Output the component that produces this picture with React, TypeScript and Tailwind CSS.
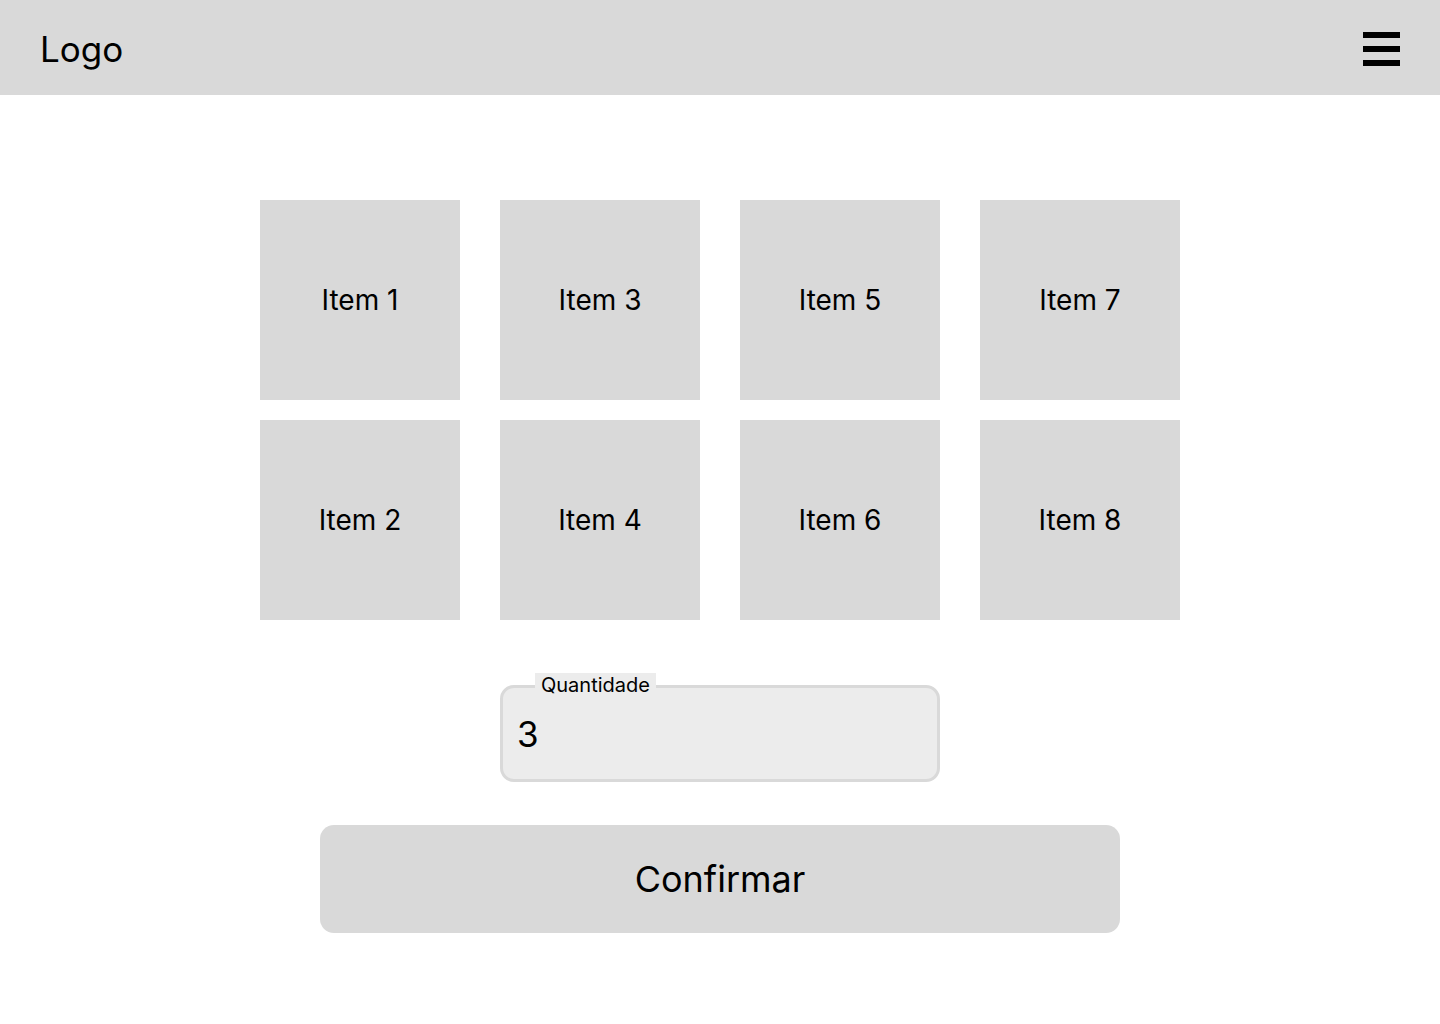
import React from "react";

export default function App() {
  const items = [1, 2, 3, 4, 5, 6, 7, 8];
  return (
    <div className="min-h-[1024px] bg-white text-black" style={{ fontFamily: "Inter, 'Noto Sans', sans-serif" }}>
      <header className="h-[95px] bg-[#d9d9d9] flex items-center justify-between pl-[40px] pr-[40px]">
        <span className="text-[35px] leading-none mt-[4px]">Logo</span>
        <div className="flex flex-col gap-[8px] w-[37px] mt-[3px]">
          <div className="h-[6px] bg-black" />
          <div className="h-[6px] bg-black" />
          <div className="h-[6px] bg-black" />
        </div>
      </header>
      <main className="flex flex-col items-center pt-[105px]">
        <div className="grid grid-rows-2 grid-flow-col gap-x-[40px] gap-y-[20px]">
          {items.map((i) => (
            <div key={i} className="w-[200px] h-[200px] bg-[#d9d9d9] flex items-center justify-center text-[28px]">
              Item {i}
            </div>
          ))}
        </div>
        <div className="relative mt-[65px] w-[440px] h-[97px] rounded-[14px] border-[3px] border-[#d9d9d9] bg-[#ececec] flex items-center pl-[14px]">
          <span className="absolute left-[32px] top-[-15px] bg-[#ececec] px-[6px] text-[20px] leading-[24px]">Quantidade</span>
          <span className="text-[35px] leading-none mt-[2px]">3</span>
        </div>
        <button className="mt-[43px] w-[800px] h-[108px] rounded-[14px] bg-[#d9d9d9] text-[36px] flex items-center justify-center">
          Confirmar
        </button>
      </main>
    </div>
  );
}
